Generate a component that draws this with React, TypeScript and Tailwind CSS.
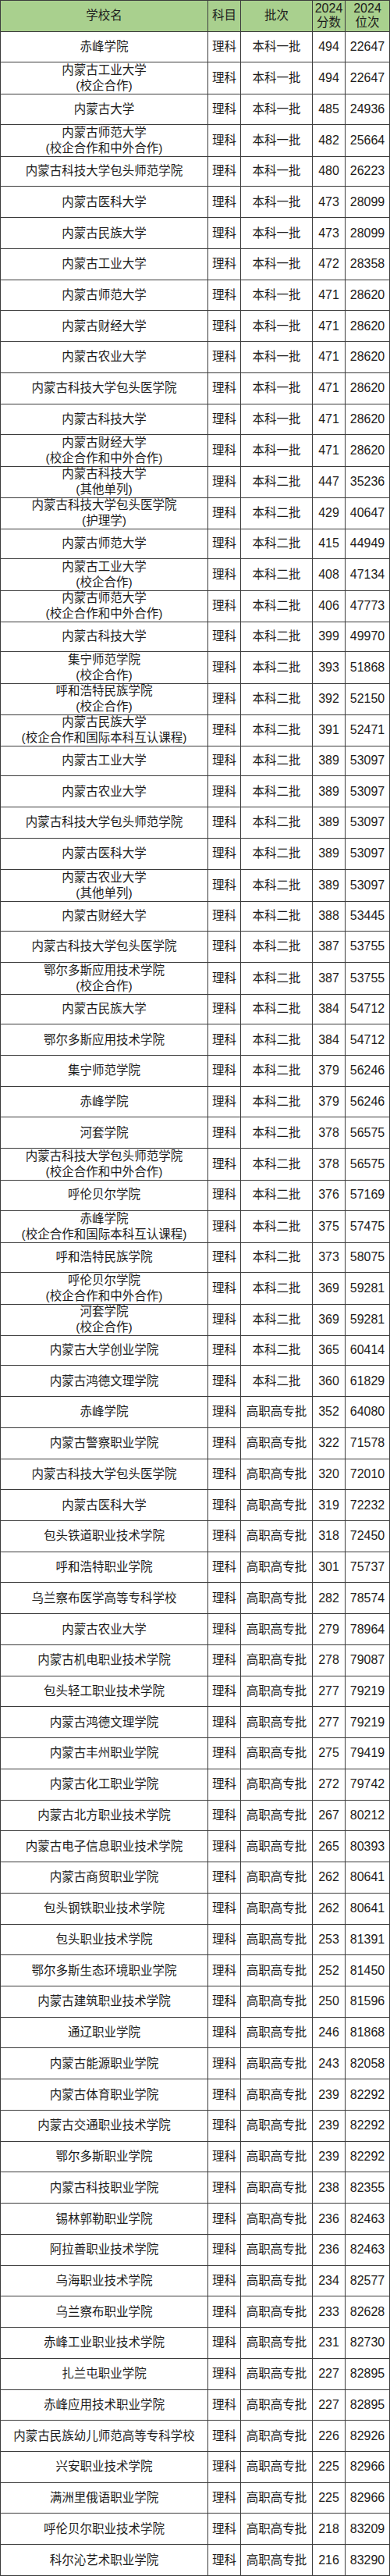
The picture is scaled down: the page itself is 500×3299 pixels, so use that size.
const rows: [string, string | null, string, number, number][] = [
  ["赤峰学院", null, "本科一批", 494, 22647],
  ["内蒙古工业大学", "(校企合作)", "本科一批", 494, 22647],
  ["内蒙古大学", null, "本科一批", 485, 24936],
  ["内蒙古师范大学", "(校企合作和中外合作)", "本科一批", 482, 25664],
  ["内蒙古科技大学包头师范学院", null, "本科一批", 480, 26223],
  ["内蒙古医科大学", null, "本科一批", 473, 28099],
  ["内蒙古民族大学", null, "本科一批", 473, 28099],
  ["内蒙古工业大学", null, "本科一批", 472, 28358],
  ["内蒙古师范大学", null, "本科一批", 471, 28620],
  ["内蒙古财经大学", null, "本科一批", 471, 28620],
  ["内蒙古农业大学", null, "本科一批", 471, 28620],
  ["内蒙古科技大学包头医学院", null, "本科一批", 471, 28620],
  ["内蒙古科技大学", null, "本科一批", 471, 28620],
  ["内蒙古财经大学", "(校企合作和中外合作)", "本科一批", 471, 28620],
  ["内蒙古科技大学", "(其他单列)", "本科二批", 447, 35236],
  ["内蒙古科技大学包头医学院", "(护理学)", "本科二批", 429, 40647],
  ["内蒙古师范大学", null, "本科二批", 415, 44949],
  ["内蒙古工业大学", "(校企合作)", "本科二批", 408, 47134],
  ["内蒙古师范大学", "(校企合作和中外合作)", "本科二批", 406, 47773],
  ["内蒙古科技大学", null, "本科二批", 399, 49970],
  ["集宁师范学院", "(校企合作)", "本科二批", 393, 51868],
  ["呼和浩特民族学院", "(校企合作)", "本科二批", 392, 52150],
  ["内蒙古民族大学", "(校企合作和国际本科互认课程)", "本科二批", 391, 52471],
  ["内蒙古工业大学", null, "本科二批", 389, 53097],
  ["内蒙古农业大学", null, "本科二批", 389, 53097],
  ["内蒙古科技大学包头师范学院", null, "本科二批", 389, 53097],
  ["内蒙古医科大学", null, "本科二批", 389, 53097],
  ["内蒙古农业大学", "(其他单列)", "本科二批", 389, 53097],
  ["内蒙古财经大学", null, "本科二批", 388, 53445],
  ["内蒙古科技大学包头医学院", null, "本科二批", 387, 53755],
  ["鄂尔多斯应用技术学院", "(校企合作)", "本科二批", 387, 53755],
  ["内蒙古民族大学", null, "本科二批", 384, 54712],
  ["鄂尔多斯应用技术学院", null, "本科二批", 384, 54712],
  ["集宁师范学院", null, "本科二批", 379, 56246],
  ["赤峰学院", null, "本科二批", 379, 56246],
  ["河套学院", null, "本科二批", 378, 56575],
  ["内蒙古科技大学包头师范学院", "(校企合作和中外合作)", "本科二批", 378, 56575],
  ["呼伦贝尔学院", null, "本科二批", 376, 57169],
  ["赤峰学院", "(校企合作和国际本科互认课程)", "本科二批", 375, 57475],
  ["呼和浩特民族学院", null, "本科二批", 373, 58075],
  ["呼伦贝尔学院", "(校企合作和中外合作)", "本科二批", 369, 59281],
  ["河套学院", "(校企合作)", "本科二批", 369, 59281],
  ["内蒙古大学创业学院", null, "本科二批", 365, 60414],
  ["内蒙古鸿德文理学院", null, "本科二批", 360, 61829],
  ["赤峰学院", null, "高职高专批", 352, 64080],
  ["内蒙古警察职业学院", null, "高职高专批", 322, 71578],
  ["内蒙古科技大学包头医学院", null, "高职高专批", 320, 72010],
  ["内蒙古医科大学", null, "高职高专批", 319, 72232],
  ["包头铁道职业技术学院", null, "高职高专批", 318, 72450],
  ["呼和浩特职业学院", null, "高职高专批", 301, 75737],
  ["乌兰察布医学高等专科学校", null, "高职高专批", 282, 78574],
  ["内蒙古农业大学", null, "高职高专批", 279, 78964],
  ["内蒙古机电职业技术学院", null, "高职高专批", 278, 79087],
  ["包头轻工职业技术学院", null, "高职高专批", 277, 79219],
  ["内蒙古鸿德文理学院", null, "高职高专批", 277, 79219],
  ["内蒙古丰州职业学院", null, "高职高专批", 275, 79419],
  ["内蒙古化工职业学院", null, "高职高专批", 272, 79742],
  ["内蒙古北方职业技术学院", null, "高职高专批", 267, 80212],
  ["内蒙古电子信息职业技术学院", null, "高职高专批", 265, 80393],
  ["内蒙古商贸职业学院", null, "高职高专批", 262, 80641],
  ["包头钢铁职业技术学院", null, "高职高专批", 262, 80641],
  ["包头职业技术学院", null, "高职高专批", 253, 81391],
  ["鄂尔多斯生态环境职业学院", null, "高职高专批", 252, 81450],
  ["内蒙古建筑职业技术学院", null, "高职高专批", 250, 81596],
  ["通辽职业学院", null, "高职高专批", 246, 81868],
  ["内蒙古能源职业学院", null, "高职高专批", 243, 82058],
  ["内蒙古体育职业学院", null, "高职高专批", 239, 82292],
  ["内蒙古交通职业技术学院", null, "高职高专批", 239, 82292],
  ["鄂尔多斯职业学院", null, "高职高专批", 239, 82292],
  ["内蒙古科技职业学院", null, "高职高专批", 238, 82355],
  ["锡林郭勒职业学院", null, "高职高专批", 236, 82463],
  ["阿拉善职业技术学院", null, "高职高专批", 236, 82463],
  ["乌海职业技术学院", null, "高职高专批", 234, 82577],
  ["乌兰察布职业学院", null, "高职高专批", 233, 82628],
  ["赤峰工业职业技术学院", null, "高职高专批", 231, 82730],
  ["扎兰屯职业学院", null, "高职高专批", 227, 82895],
  ["赤峰应用技术职业学院", null, "高职高专批", 227, 82895],
  ["内蒙古民族幼儿师范高等专科学校", null, "高职高专批", 226, 82926],
  ["兴安职业技术学院", null, "高职高专批", 225, 82966],
  ["满洲里俄语职业学院", null, "高职高专批", 225, 82966],
  ["呼伦贝尔职业技术学院", null, "高职高专批", 218, 83209],
  ["科尔沁艺术职业学院", null, "高职高专批", 216, 83290],
];

const row = "grid h-[39.74px] grid-cols-[266px_42px_92px_42px_57px]";
const cell = "flex flex-col items-center justify-center border-r border-b border-[#3c3c3c] text-center";

export default function App() {
  return (
    <div className="w-[500px] bg-white text-[#1c1c1c] font-['Liberation_Sans','Noto_Sans_CJK_SC',sans-serif] text-[15.5px] leading-[20px]">
      <div className="border-t border-l border-[#3c3c3c]">
        <div className={`${row} bg-[#a9d08e]`}>
          <div className={cell}>学校名</div>
          <div className={cell}>科目</div>
          <div className={cell}>批次</div>
          <div className={`${cell} leading-[18px]`}>
            <span className="text-[16px]">2024</span>
            <span>分数</span>
          </div>
          <div className={`${cell} leading-[18px]`}>
            <span className="text-[16px]">2024</span>
            <span>位次</span>
          </div>
        </div>
        {rows.map(([name, note, batch, score, rank], i) => (
          <div key={i} className={row}>
            <div className={cell}>
              <span>{name}</span>
              {note && <span>{note}</span>}
            </div>
            <div className={cell}>理科</div>
            <div className={cell}>{batch}</div>
            <div className={`${cell} text-[16px]`}>{score}</div>
            <div className={`${cell} text-[16px]`}>{rank}</div>
          </div>
        ))}
      </div>
    </div>
  );
}
